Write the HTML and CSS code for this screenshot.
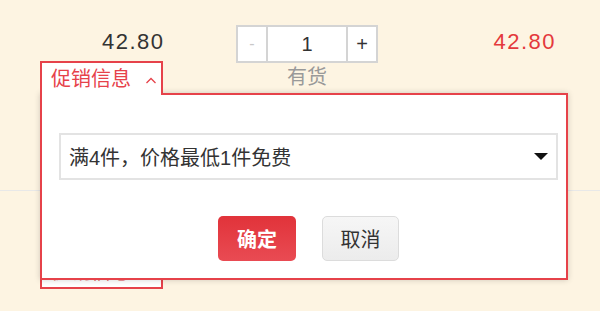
FILE: index.html
```html
<!DOCTYPE html>
<html lang="zh-CN">
<head>
    <meta charset="UTF-8">
    <meta name="viewport" content="width=device-width, initial-scale=1.0">
    <title>购物车</title>
    <link rel="stylesheet" href="styles.css">
</head>
<body>
    <div class="cart-list">
        <div class="cart-item">
            <div class="col-price">
                <div class="price">42.80</div>
                <div class="promo promo-open">
                    <a class="promo-tab">促销信息<svg class="promo-arrow" width="12" height="7" viewBox="0 0 12 7"><polyline points="1.5,6 6,1.5 10.5,6" fill="none" stroke="#e6424a" stroke-width="1.3"/></svg></a>
                    <div class="promo-popup">
                        <div class="promo-select">
                            <span>满4件，价格最低1件免费</span>
                            <svg width="14" height="7" viewBox="0 0 14 7"><polygon points="0,0 14,0 7,7" fill="#111"/></svg>
                        </div>
                        <div class="promo-actions">
                            <button type="button" class="btn btn-ok">确定</button>
                            <button type="button" class="btn btn-cancel">取消</button>
                        </div>
                    </div>
                </div>
            </div>
            <div class="col-qty">
                <div class="quantity">
                    <span class="qty-btn qty-minus">-</span>
                    <input class="qty-input" type="text" value="1">
                    <span class="qty-btn qty-plus">+</span>
                </div>
                <div class="stock">有货</div>
            </div>
            <div class="col-sum price">42.80</div>
        </div>

        <div class="cart-item">
            <div class="col-price">
                <div class="price">42.80</div>
                <div class="promo">
                    <a class="promo-tab">促销信息<svg class="promo-arrow" width="12" height="7" viewBox="0 0 12 7"><polyline points="1.5,1 6,5.5 10.5,1" fill="none" stroke="#e6424a" stroke-width="1.3"/></svg></a>
                </div>
            </div>
            <div class="col-qty">
                <div class="quantity">
                    <span class="qty-btn qty-minus">-</span>
                    <input class="qty-input" type="text" value="1">
                    <span class="qty-btn qty-plus">+</span>
                </div>
                <div class="stock">有货</div>
            </div>
            <div class="col-sum price">42.80</div>
        </div>
    </div>
</body>
</html>
```

FILE: styles.css
```css
body {
    margin: 0;
    background-color: #fdf4e2;
    font-family: "Liberation Sans", "Noto Sans CJK SC", sans-serif;
    color: #333;
    overflow: hidden;
}

.cart-list {
    margin-top: -3px;
}

.cart-item {
    display: flex;
    height: 194px;
    box-sizing: border-box;
    padding-top: 28px;
    border-bottom: 1px solid #e8e8e8;
}

.price {
    font-size: 22px;
    line-height: 22px;
    letter-spacing: 1.5px;
    text-align: right;
    margin-top: 6px;
}

.col-price {
    width: 123px;
    margin-left: 40px;
}

.col-price .price {
    margin-right: -1.5px;
}

.promo {
    position: relative;
    margin-top: 8px;
}

.promo-open {
    z-index: 10;
}

.promo-tab {
    display: flex;
    align-items: center;
    height: 30px;
    padding-left: 9px;
    border: 2px solid #e6424a;
    background-color: #fff;
    color: #e6424a;
    font-size: 20px;
    line-height: 20px;
    position: relative;
    z-index: 2;
    cursor: pointer;
}

.promo-open .promo-tab {
    height: 32px;
    border-bottom: 0;
}

.promo-arrow {
    margin-left: 14px;
    margin-top: 3px;
}

.promo-popup {
    position: absolute;
    left: 0;
    top: 32px;
    width: 528px;
    height: 187px;
    box-sizing: border-box;
    padding: 38px 8px 0 17px;
    border: 2px solid #e6424a;
    background-color: #fff;
    box-shadow: 0 0 6px rgba(0, 0, 0, 0.18);
    z-index: 1;
}

.promo-select {
    display: flex;
    align-items: center;
    justify-content: space-between;
    height: 47px;
    box-sizing: border-box;
    padding: 0 8px;
    border: 2px solid #e3e3e3;
    font-size: 20px;
    color: #333;
}

.promo-actions {
    display: flex;
    justify-content: center;
    gap: 26px;
    margin-top: 36px;
}

.btn {
    height: 45px;
    padding: 0;
    border-radius: 5px;
    font-family: inherit;
    font-size: 20px;
    cursor: pointer;
}

.btn-ok {
    width: 78px;
    border: none;
    background: linear-gradient(#e1333a, #e94b53);
    color: #fff;
    font-weight: bold;
}

.btn-cancel {
    width: 77px;
    border: 1px solid #dcdcdc;
    background: linear-gradient(#f6f6f6, #ececec);
    color: #333;
}

.col-qty {
    display: flex;
    flex-direction: column;
    align-items: center;
    width: 142px;
    margin-left: 73px;
}

.quantity {
    display: flex;
    height: 38px;
}

.qty-btn {
    display: flex;
    align-items: center;
    justify-content: center;
    width: 32px;
    height: 38px;
    box-sizing: border-box;
    border: 2px solid #d4d4d4;
    background-color: #fff;
    font-size: 20px;
}

.qty-minus {
    color: #c8c8c8;
    font-size: 16px;
}

.qty-plus {
    color: #333;
}

.qty-input {
    width: 82px;
    height: 38px;
    box-sizing: border-box;
    margin: 0 -2px;
    padding: 0;
    border: 2px solid #d4d4d4;
    font-family: inherit;
    font-size: 20px;
    color: #333;
    text-align: center;
    outline: none;
}

.stock {
    margin-top: 3px;
    font-size: 20px;
    line-height: 22px;
    color: #999;
}

.col-sum {
    flex: 1;
    padding-right: 44px;
    color: #e4393c;
}
```
